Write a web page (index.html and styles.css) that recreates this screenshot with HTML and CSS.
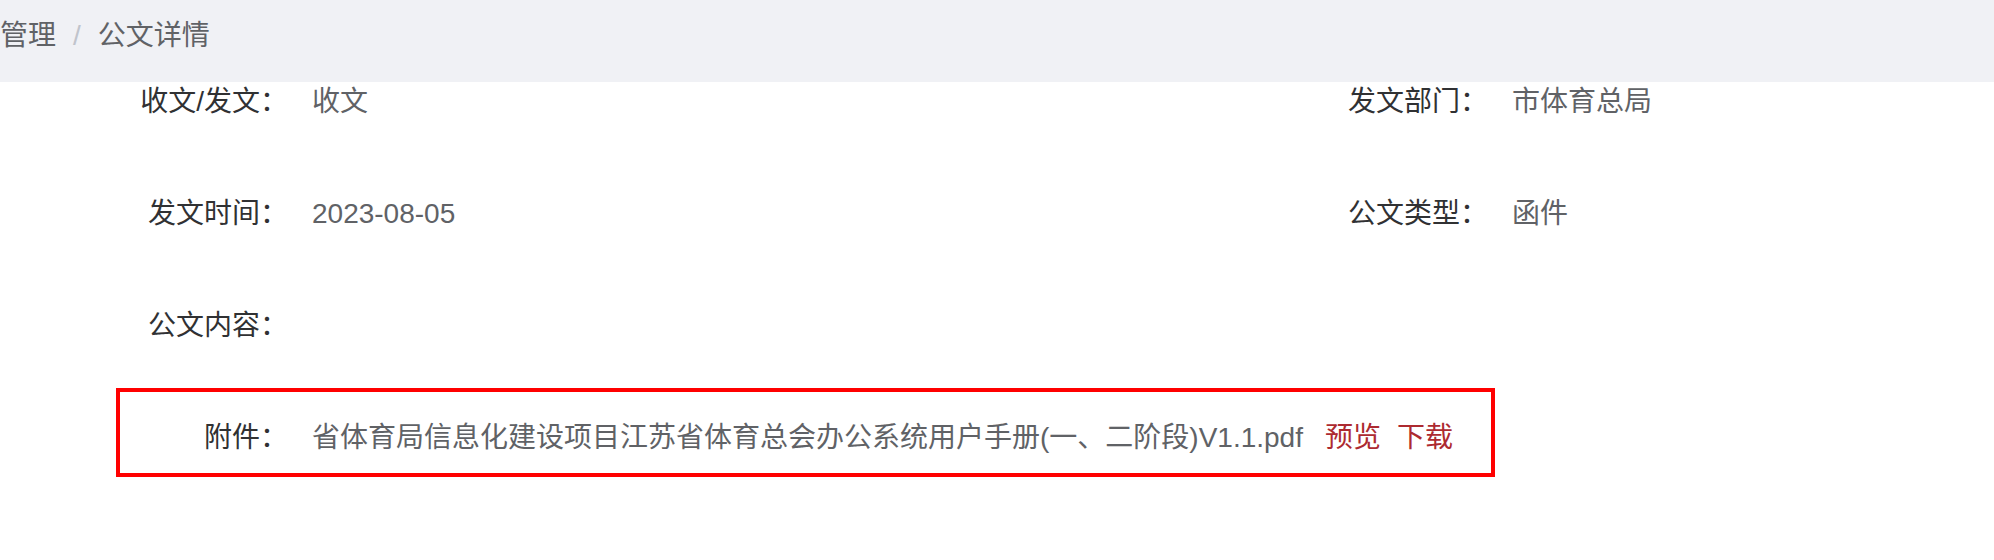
FILE: index.html
```html
<!DOCTYPE html>
<html lang="zh-CN">
<head>
<meta charset="utf-8">
<title>公文详情</title>
<link rel="stylesheet" href="styles.css">
</head>
<body>
<div class="page">
  <header class="topbar">
    <nav class="breadcrumb">
      <span class="crumb">管理</span>
      <span class="sep">/</span>
      <span class="crumb current">公文详情</span>
    </nav>
  </header>
  <main class="detail">
    <div class="row">
      <div class="item">
        <span class="label">收文/发文：</span>
        <span class="value">收文</span>
      </div>
      <div class="item">
        <span class="label">发文部门：</span>
        <span class="value">市体育总局</span>
      </div>
    </div>
    <div class="row">
      <div class="item">
        <span class="label">发文时间：</span>
        <span class="value">2023-08-05</span>
      </div>
      <div class="item">
        <span class="label">公文类型：</span>
        <span class="value">函件</span>
      </div>
    </div>
    <div class="row">
      <div class="item">
        <span class="label">公文内容：</span>
        <span class="value"></span>
      </div>
    </div>
    <div class="highlight">
      <div class="row row-last">
        <div class="item item-wide">
          <span class="label">附件：</span>
          <span class="value">省体育局信息化建设项目江苏省体育总会办公系统用户手册(一、二阶段)V1.1.pdf</span>
          <a class="link first">预览</a>
          <a class="link">下载</a>
        </div>
      </div>
    </div>
  </main>
</div>
</body>
</html>
```

FILE: styles.css
```css
* {
  box-sizing: border-box;
}

html, body {
  margin: 0;
  padding: 0;
  background: #ffffff;
}

body {
  width: 1994px;
  height: 560px;
  overflow: hidden;
  font-family: "Liberation Sans", "Noto Sans CJK SC", sans-serif;
  font-size: 28px;
}

.topbar {
  height: 82px;
  background: #f0f1f5;
  padding-top: 16px;
}

.breadcrumb {
  display: flex;
  align-items: center;
  height: 40px;
  line-height: 40px;
  color: #606266;
}

.sep {
  color: #c0c4cc;
  margin: 0 17px;
}

.detail {
  padding-left: 120px;
}

.row {
  display: grid;
  grid-template-columns: 1200px auto;
  height: 40px;
  line-height: 40px;
  margin-bottom: 72px;
}

.item {
  display: flex;
}

.label {
  flex: 0 0 168px;
  text-align: right;
  color: #303133;
  white-space: nowrap;
}

.value {
  padding-left: 24px;
  color: #606266;
  white-space: nowrap;
}

.highlight {
  width: 1379px;
  margin-top: -30px;
  margin-left: -4px;
  border: 4px solid #ff0000;
  padding: 26px 0 15px 0;
}

.row-last {
  display: flex;
  margin-bottom: 0;
}

.link {
  color: #ad2a30;
  cursor: pointer;
  white-space: nowrap;
}

.link.first {
  margin-left: 22px;
}

.link + .link {
  margin-left: 16px;
}
```
